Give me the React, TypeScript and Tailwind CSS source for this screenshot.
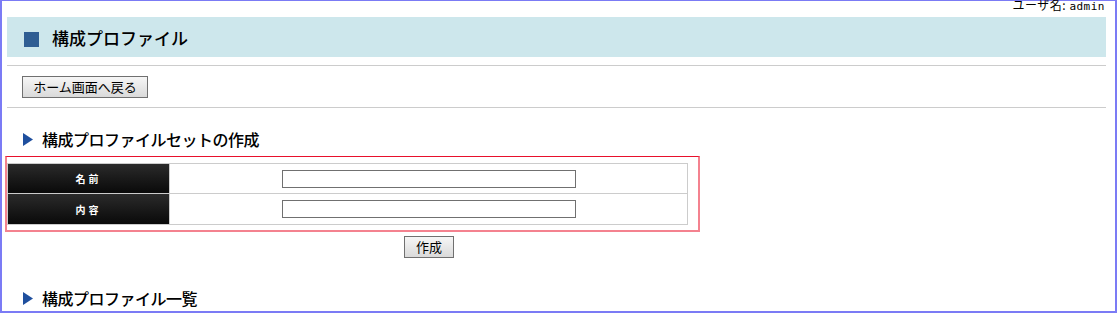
import React from "react";

const jp = { fontFamily: '"Noto Sans CJK JP", "Liberation Sans", sans-serif' };

function Tri() {
  return (
    <svg width="10" height="13" viewBox="0 0 10 13" className="shrink-0 block">
      <polygon points="0,0 10,6.5 0,13" fill="#1f4f9e" />
    </svg>
  );
}

export default function App() {
  return (
    <div className="w-[1119px] h-[313px] bg-white overflow-hidden" style={jp}>
      <div className="relative w-[1117px] h-[313px] border-l-2 border-t border-r-2 border-b-2 border-[#7b7bf5] box-border">
        <div className="absolute top-[-4px] right-[10px] text-[12px] leading-[16px] text-black tracking-[0.5px]">
          ユーザ名: <span style={{ fontFamily: '"DejaVu Sans Mono", monospace' }} className="text-[11px]">admin</span>
        </div>

        <div className="ml-[5px] mr-[9px] mt-[16px] h-[40px] bg-[#cde7ec] flex items-center">
          <div className="ml-[17px] mt-[4px] w-[15px] h-[15px] bg-[#2f5e93]" />
          <div className="ml-[13px] mt-[2px] text-[17px] leading-[20px] text-black font-medium">構成プロファイル</div>
        </div>

        <div className="ml-[5px] mr-[9px] mt-[8px] h-px bg-[#cccccc]" />

        <div className="ml-[20px] mt-[10px] flex">
          <button className="h-[22px] w-[126px] border border-[#707070] bg-gradient-to-b from-[#f6f6f6] to-[#dadada] text-[13px] leading-[20px] text-black">
            ホーム画面へ戻る
          </button>
        </div>

        <div className="ml-[5px] mr-[9px] mt-[9px] h-px bg-[#cccccc]" />

        <div className="ml-[21px] mt-[21px] h-[20px] flex items-center">
          <Tri />
          <div className="ml-[9px] text-[16px] leading-[20px] font-medium text-black tracking-[-0.5px]">構成プロファイルセットの作成</div>
        </div>

        <div className="ml-[3px] mt-[7px] w-[695px] h-[76px] border-t border-t-[#e8102c] border-l-2 border-r-2 border-b-2 border-l-[#f4828f] border-r-[#f4828f] border-b-[#f4828f] box-border pt-[6px]">
          <div className="w-[681px] border border-[#cccccc]">
            <div className="flex h-[30px] border-b border-[#cccccc]">
              <div className="w-[161px] bg-gradient-to-b from-[#2b2b2b] to-[#0a0a0a] flex items-center justify-center text-white text-[10px] font-bold tracking-[3px]">
                名前
              </div>
              <div className="w-px bg-[#cccccc]" />
              <div className="flex-1 flex items-center justify-center">
                <div className="w-[294px] h-[18px] border border-[#707070] bg-white" />
              </div>
            </div>
            <div className="flex h-[30px]">
              <div className="w-[161px] bg-gradient-to-b from-[#2b2b2b] to-[#0a0a0a] flex items-center justify-center text-white text-[10px] font-bold tracking-[3px]">
                内容
              </div>
              <div className="w-px bg-[#cccccc]" />
              <div className="flex-1 flex items-center justify-center">
                <div className="w-[294px] h-[18px] border border-[#707070] bg-white" />
              </div>
            </div>
          </div>
        </div>

        <div className="ml-[5px] mt-[4px] flex w-[681px]">
          <div className="w-[163px]" />
          <div className="flex-1 flex justify-center">
            <button className="h-[22px] w-[50px] border border-[#707070] bg-gradient-to-b from-[#f6f6f6] to-[#dadada] text-[13px] leading-[20px] text-black">
              作成
            </button>
          </div>
        </div>

        <div className="ml-[21px] mt-[30px] h-[20px] flex items-center">
          <Tri />
          <div className="ml-[9px] text-[16px] leading-[20px] font-medium text-black tracking-[-0.5px]">構成プロファイル一覧</div>
        </div>
      </div>
    </div>
  );
}
